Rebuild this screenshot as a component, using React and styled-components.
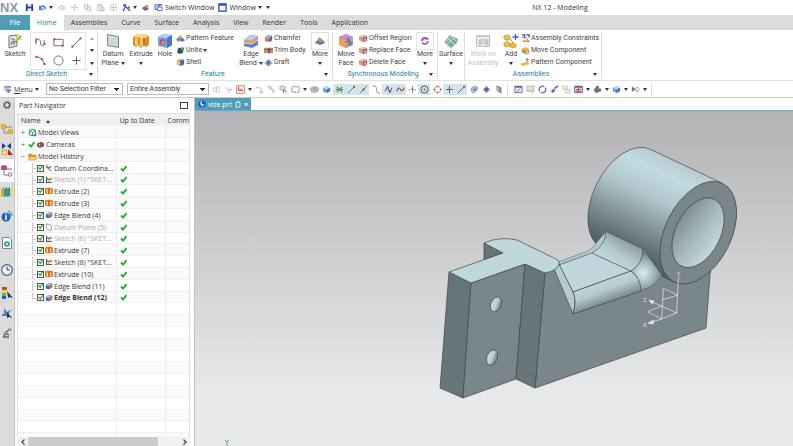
import React, { useState } from 'react'
import styled, { createGlobalStyle } from 'styled-components'

const icons = {
  save: <><path d="M1 1h7l1 1v7H1z" fill="#2d3c9c" /><path d="M3 1h4v3H3z" fill="#dfe6f5" /><path d="M3 6h4v3H3z" fill="#eef2fa" /></>,
  undo: <path d="M2 3v4h4M2 6c2-4 6-3 6 1" fill="none" stroke="#4c8bd4" strokeWidth="2" />,
  redo: <path d="M8 3v4H4M8 6C6 2 2 3 2 7" fill="none" stroke="#d3d6da" strokeWidth="2" />,
  cut: <path d="M5 1v8M1 5h8" fill="none" stroke="#cdcdcd" strokeWidth="1.500" />,
  copy: <path d="M1.500 1.500h4v5h-4zM4.500 3.500h4v5h-4z" fill="#f2f2f2" stroke="#c6c6c6" />,
  paste: <path d="M1.500 2.500h6v6h-6zM3 1h3v2H3zM5 5h4v4H5z" fill="#eee" stroke="#c9c9c9" />,
  plus: <><circle cx="5" cy="5" r="4" fill="none" stroke="#c9c9c9" /><path d="M5 2v6M2 5h6" stroke="#bbb" strokeWidth="1" /></>,
  people: <><circle cx="3" cy="2.500" r="1.800" fill="#4166c4" /><path d="M1 9l3-5 3 3 2 2" fill="none" stroke="#4166c4" strokeWidth="1.500" /><circle cx="7.500" cy="5" r="1.500" fill="#d34a55" /></>,
  spark: <><path d="M1 6l4-2 4 2-4 3z" fill="#536bb5" /><path d="M5 1l4 3-3 2z" fill="#e98a3a" /><path d="M1 5l4-2v3z" fill="#c8655b" /></>,
  switchWin: <><path d="M1 2h5v5H1z" fill="#cfe0f7" stroke="#3567b8" /><path d="M4 4.500h5v4H4z" fill="#fff" stroke="#3567b8" /><path d="M5 1h4v2H5z" fill="#3f7de0" /></>,
  win: <><path d="M1 1h8v8H1z" fill="#fff" stroke="#1f4ec0" strokeWidth="1.400" /><path d="M1 1h8v2H1z" fill="#1f4ec0" /></>,
  pattern: <><path d="M0 6l3-3 3 2-3 4z" fill="#6f86cf" /><path d="M2 4l3-3 2 3-2 2z" fill="#e59a3c" /><path d="M4 7l3-3 3 3-3 2z" fill="#5b74c8" /></>,
  unite: <><path d="M2 2h6v6H2z" fill="#2d6d6c" /><circle cx="4" cy="6" r="2.500" fill="#3c4a50" /><path d="M6 1l3 1v3H6z" fill="#4f9f86" /></>,
  shell: <><path d="M1 3l3-2 5 1v5L5 9 1 7z" fill="#e58b52" /><path d="M5 3l4-1v5L5 9z" fill="#3c61c4" /><path d="M2 3h2v4H2z" fill="#f5d0b0" /></>,
  chamfer: <><path d="M1 4l3-3 5 1v5L6 9 1 8z" fill="#dd8245" /><path d="M1 4l3-3 5 1-3 3z" fill="#8eb0ea" /><path d="M6 5l3-3v5L6 9z" fill="#3f68c4" /></>,
  trim: <><path d="M0 2h4v6H0zM6 2h4v6H6z" fill="#e88a3f" /><path d="M4 2h3v6H4z" fill="#4466c8" /><path d="M0 4h10" stroke="#b0413b" /></>,
  draft: <><path d="M0 6l4-4h2l4 4-5 3z" fill="#9aaedd" /><path d="M4 2h2v7H4z" fill="#c95c63" /><path d="M2 5l3-2 3 2-3 2z" fill="#5a6fb9" /></>,
  face: <><path d="M0 3l4-2 5 1v5L4 9 0 7z" fill="#df9b63" /><path d="M0 3l4-2 5 1-5 2z" fill="#ecc59b" /><path d="M4 4l5-1v5L5 9z" fill="#9a5f9f" /><path d="M6 5l2 1v2L6 7z" fill="#e8d6ee" /></>,
  constraint: <><path d="M1 1h3v3M6 1h3v3" fill="none" stroke="#3d4fd0" strokeWidth="1.500" /><path d="M1 4h5" stroke="#d04545" /><path d="M2 8h7M4 6v3" stroke="#d9a32b" strokeWidth="1.500" /><path d="M6 5l3 4" stroke="#c33" /></>,
  moveComp: <><path d="M1 3l4-2 4 2v4L5 9 1 7z" fill="#eab83f" /><path d="M1 3l4 2v4L1 7z" fill="#cf942a" /><circle cx="7" cy="7" r="2" fill="#cfd3d8" stroke="#777" strokeWidth=".6" /></>,
  patComp: <><path d="M0 6l3-1 2 1v2L2 9 0 8zM4 5l3-1 2 1v2L6 8z" fill="#eab83f" /><path d="M7 0v4M5 2h4" stroke="#4e87d8" /></>,
  menu: <><path d="M1 1h8v2H1zM1 4h6v1H1zM2 6h3v1H2z" fill="#7d92b5" /><path d="M4 5h5v2H7v2H5V7H4z" fill="#66789c" /></>,
  g1: <><circle cx="3" cy="5" r="2" fill="none" stroke="#c8c8c8" /><path d="M5 2h3v6H5z" fill="none" stroke="#c8c8c8" /></>,
  g2: <path d="M1 2l3 3h5M5 5v4M7 3v4" fill="none" stroke="#c4c4c4" />,
  redbox: <><path d="M.700.700h8.600v8.600H.700z" fill="#fff1ef" stroke="#d8796c" /><path d="M3 2v4h4M5 4l3 3" fill="none" stroke="#b33" /></>,
  g3: <path d="M1 3h3c4 0 3 3 3 6M5 7l2 2 2-2" fill="none" stroke="#bdbdbd" strokeWidth="1.200" />,
  g4: <path d="M1 1l4 1v3L1 3zM4 4l4 1v4L6 8V5z" fill="#cfcfcf" stroke="#bbb" strokeWidth=".5" />,
  cursorBox: <><path d="M1 2l3-1 3 1v3L4 6 1 5z" fill="#ddd" stroke="#888" strokeWidth=".6" /><path d="M5 5l4 3M5 5v4" stroke="#c44" /></>,
  dashed: <path d="M1 2h8v6H1z" fill="none" stroke="#555" strokeDasharray="1.500 1" />,
  disc: <><ellipse cx="5" cy="5" rx="4.500" ry="3" fill="#b9bfca" stroke="#79839a" strokeWidth=".7" /><ellipse cx="5" cy="4.500" rx="2" ry="1.200" fill="#cf8d83" /></>,
  cube: <><path d="M1 3l4-2 4 2v4L5 9 1 7z" fill="#6f9be2" /><path d="M1 3l4-2 4 2-4 2z" fill="#c0dbfa" /><path d="M5 5l4-2v4L5 9z" fill="#4674c6" /></>,
  snap: <><path d="M2 2l6 6M8 2L2 8M1 5h8" stroke="#4a6e46" strokeWidth="1.200" /><circle cx="5" cy="5" r="1.500" fill="#e28a3e" /></>,
  slash: <><path d="M1 9l8-8" stroke="#666" /><circle cx="8" cy="2" r="1.200" fill="#c44" /></>,
  slashMid: <><path d="M1 9l8-8" stroke="#666" /><circle cx="5" cy="5" r="1.300" fill="#c44" /></>,
  curve: <path d="M1 1c4 0 4 2 4 4s0 4 4 4" fill="none" stroke="#777" />,
  zig: <><path d="M1 7l3-5 2 6 3-5" fill="none" stroke="#4e62b8" strokeWidth="1.200" /><circle cx="4" cy="3" r="1.200" fill="#c44" /><circle cx="7" cy="7" r="1.200" fill="#c44" /></>,
  wave: <path d="M1 7c1-5 3-4 4-2s3 2 4-2" fill="none" stroke="#b33c3c" strokeWidth="1.300" />,
  tee: <><path d="M5 1v8M1 6c2-2 6-2 8 0" fill="none" stroke="#8a8a8a" /><circle cx="5" cy="5" r="1" fill="#c66" /></>,
  target: <><circle cx="5" cy="5" r="4" fill="none" stroke="#44575e" /><circle cx="5" cy="5" r="1.200" fill="#c44" /></>,
  circ: <><circle cx="5" cy="5" r="3.500" fill="none" stroke="#999" /><path d="M5 .500v2M5 7.500v2M.500 5h2M7.500 5h2" stroke="#d55" strokeWidth="1.500" /></>,
  cross: <><path d="M5 1v8M1 5h8" stroke="#555" /><circle cx="5" cy="5" r="1" fill="#c44" /></>,
  gem: <><path d="M1 5l4-4 4 4-4 4z" fill="#7587c8" /><path d="M3 5l2-2 2 2-2 2z" fill="#8c3e72" /></>,
  shade: <><path d="M3 1l5 2v6L4 7z" fill="#979797" stroke="#666" strokeWidth=".6" /><path d="M2 2l3 1v4L2 6z" fill="#bcbcbc" /></>,
  surf: <><path d="M2 3l4-2 3 2-2 4-4 2-2-3z" fill="#a7c4ec" stroke="#6586be" strokeWidth=".7" /><path d="M5 3v4M3 5h5" stroke="#c25a5a" strokeWidth=".8" /></>,
  zoomwin: <><path d="M1 1.500h8v7H1z" fill="#e7edf6" stroke="#576d99" /><path d="M1 1h8v2H1z" fill="#576d99" /><path d="M3 8l4-4" stroke="#c44" /></>,
  note: <><path d="M1 1h8v6H1z" fill="#dcdfe4" stroke="#a8adb8" strokeWidth=".8" /><circle cx="7" cy="7" r="2" fill="#e8c98b" /></>,
  rotate: <path d="M2 7a3.600 3.600 0 0 1 5-5M8 3a3.600 3.600 0 0 1-5 5" fill="none" stroke="#5a75b8" strokeWidth="1.500" />,
  probe: <><path d="M1 7l3-3 2 2-3 3z" fill="#4762c6" /><path d="M5 4l4-3" stroke="#4762c6" strokeWidth="1.500" /><circle cx="4" cy="6" r="1" fill="#c55" /></>,
  sheets: <path d="M1 1h5v4H1zM4 5h5v4H4z" fill="#eee" stroke="#bbb" strokeWidth=".8" />,
  grid: <><path d="M.700 1.500h8.600v7H.700z" fill="#f9dedb" stroke="#4a68b5" /><path d="M1 1h8v2H1z" fill="#4a68b5" /><path d="M2 5h6M2 7h6M5 3v5" stroke="#d2564d" strokeWidth="1.300" /></>,
  gray: <path d="M1 5l3-4h3l-1 3h3v3L4 9 2 8z" fill="#6d7377" />,
  axis: <><path d="M1 1v7l3-3z" fill="#3c9c54" /><path d="M2 3l4 3" stroke="#c44" strokeWidth="1.300" /><path d="M7 2l2 3-2 3-2-3z" fill="#fff" stroke="#777" strokeWidth=".7" /></>,
  views: <><circle cx="5" cy="5" r="3.600" fill="#e8f3ec" stroke="#3d9a66" strokeWidth="1.300" /><path d="M2 3l3 2 3-2M5 5v4" fill="none" stroke="#3d9a66" /><circle cx="8" cy="8" r="1.300" fill="#6a5fc0" /></>,
  camera: <><path d="M1 4l5-2 3 2v3L4 9 1 7z" fill="#a6473f" /><circle cx="4" cy="5.500" r="2" fill="#5064a8" /><circle cx="4" cy="5.500" r=".8" fill="#fff" /></>,
  folder: <><path d="M0 2h4l1 1h4v6H1z" fill="#d49b28" /><path d="M2 5h8L8 9H1z" fill="#f7d76b" stroke="#b08322" strokeWidth=".5" /></>,
  datum: <><path d="M2 1l1 4 5 4M3 5l5-2" fill="none" stroke="#555" strokeWidth="1.200" /><path d="M1 3l4 3" stroke="#a33" /><path d="M5 2l3 4" stroke="#888" /></>,
  sketch: <><path d="M2 1v8M2 4h3M2 8h7" fill="none" stroke="#444" strokeWidth="1.200" /><path d="M4 7l4-5" stroke="#caa247" strokeWidth="1.300" /><path d="M5 4h4" fill="none" stroke="#555" /></>,
  extrude: <><path d="M0 2l3-1h4l3 1v6l-3 1H3L0 8z" fill="#e07c27" /><path d="M2 3h2v5H2zM6 3h2v5H6z" fill="#fbd191" /><path d="M5 2v7" stroke="#a24a3f" /></>,
  blend: <><path d="M1 4l4-3 4 1v5L5 9 1 8z" fill="#4268c5" /><path d="M1 4l4-3 4 1-4 3z" fill="#a9c2f0" /><path d="M5 5c2 0 2-2 4-2v4L5 9z" fill="#dd6c3b" /></>,
  plane: <path d="M2 1l3 1 3 1v6H4L2 7z" fill="#fafafa" stroke="#8a8f90" />,
  prt: <><circle cx="5" cy="5" r="4.500" fill="#1c51c9" /><path d="M3 2h2v3l3 1-2 2-3-2z" fill="#dce7ff" /></>,
  clip: <path d="M2.500 3h5v6h-5zM4 1.500h2V3" fill="none" stroke="#fff" />,

  sketchBig: <><path d="M2 3l8-1v11l-8 2z" fill="#e4e7e0" stroke="#66776e" /><path d="M4 6h3v3h3M4 12l1-3M7 12v-3M4 9h6" fill="none" stroke="#6a7a72" strokeWidth="1.100" /><path d="M12 0l.800 3 3.200-1-2 2.500 1 3-3-1.500-3 2 1-3-2.500-2 3.500 0z" fill="#ddd94c" /><path d="M10 8l4-5" stroke="#5fae62" strokeWidth="1.200" /></>,
  datumBig: <path d="M2.500 1.500l11 2v11l-11-2z" fill="#cfdcd4" stroke="#7b8b84" />,
  extrudeBig: <><path d="M0 4l4-3h8l4 2v9l-3 2-2-2-3 3-3-3-2 2-3-2z" fill="#dd8c28" /><path d="M2 5h3v7H2zM7 4h3v9H7z" fill="#f8c766" /><path d="M0 4l4-3h8l4 2-4 2z" fill="#fad78f" /><path d="M11 5v8" stroke="#a85e20" /></>,
  holeBig: <><path d="M1 4l5-3 9 1v10l-5 3-9-2z" fill="#7d9fe6" /><path d="M1 4l5-3 9 1-5 3z" fill="#b5cdf7" /><path d="M10 5l5-3v10l-5 3z" fill="#4f72c5" /><circle cx="5.500" cy="9" r="3" fill="#8a5f80" /><circle cx="6" cy="9.500" r="2" fill="#e38a56" /></>,
  blendBig: <><path d="M1 7l6-5 8 1v9l-6 3-8-2z" fill="#5b82d8" /><path d="M1 7l6-5 8 1-6 5z" fill="#b4cdf5" /><path d="M1 7l8 1 6-5v4l-6 4-8-1z" fill="#ee9b52" /><path d="M1 10l8 1 6-4" fill="none" stroke="#f7d79e" /></>,
  moreBig: <><path d="M3 10l4-5 3 1 3 4-5 2z" fill="#5c79c9" /><path d="M7 4l3 2v3l-4-1z" fill="#e58f3d" /></>,
  moveBig: <><path d="M1 4l7-3 7 3v8l-7 3-7-3z" fill="#d88b55" /><path d="M1 4l7-3 7 3-7 3z" fill="#c58cd3" /><path d="M8 7l7-3v8l-7 3z" fill="#a7a6b2" /><path d="M1 4l7 3v8l-7-3z" fill="#eca05a" /><path d="M11 5v8M7 9h8M9 6l5 6" stroke="#75747f" strokeWidth="1.200" /></>,
  replBig: <><path d="M4 8c0-5 6-5 8-2l-2 1-3-1-1 2z" fill="#9657ae" /><path d="M12 8c0 5-6 5-8 2l2-1 3 1 1-2z" fill="#b079c4" /></>,
  surfBig: <><path d="M1 9l6-7 8 4-1 4-6 5z" fill="#7cab95" /><path d="M4 5l8 7M7 2l7 7M4 11l9-7M2 9l8-6" stroke="#d5e6dc" strokeWidth=".8" /></>,
  workBig: <><path d="M1.500 2.500h13v11h-13z" fill="#eee" stroke="#bbb" /><path d="M1 2h14v2H1z" fill="#c9c9c9" /><path d="M4 7l3-1v5l-3 1zM9 6l4 1v5l-4-1z" fill="#ccc" stroke="#aaa" strokeWidth=".5" /></>,
  addBig: <><path d="M1 3l3-1 3 1v3L4 7 1 6zM1 10l3-1 3 1v3l-3 1-3-1zM7 11l3-1 3 1v3l-3 1-3-1z" fill="#edc04a" stroke="#b78722" strokeWidth=".6" /><path d="M4 7v2M7 5l3 5" stroke="#c2953a" /><path d="M12.500 1v6M9.500 4h6" stroke="#2b64c9" strokeWidth="1.300" /></>,

  profile: <><path d="M1 3v5M1 6c0-5 5-5 5 0s4 5 4 0V3" fill="none" stroke="#666" /><circle cx="1.500" cy="2.500" r="1.100" fill="#c33" /><circle cx="10.500" cy="7.500" r="1.100" fill="#c33" /></>,
  rect: <><path d="M1 2.500h10v7H1z" fill="none" stroke="#666" /><circle cx="1.500" cy="2.500" r="1.200" fill="#c33" /><circle cx="10.500" cy="9.500" r="1.200" fill="#c33" /></>,
  line: <><path d="M2 10l8-8" stroke="#666" /><circle cx="1.500" cy="10.500" r="1.200" fill="#c33" /><circle cx="10.500" cy="1.500" r="1.200" fill="#c33" /></>,
  arc: <><path d="M1 2c5 0 8 3 9 8" fill="none" stroke="#666" /><circle cx="1.500" cy="2" r="1.200" fill="#c33" /><circle cx="7.500" cy="4.500" r="1.200" fill="#c33" /><circle cx="10.500" cy="10" r="1.200" fill="#c33" /></>,
  circleTool: <circle cx="6" cy="6" r="5" fill="none" stroke="#666" />,
  point: <path d="M6 1.500v9M1.500 6h9" stroke="#555" />,

  gear: <><circle cx="6" cy="6" r="2.600" fill="none" stroke="#555" strokeWidth="1.200" /><circle cx="6" cy="6" r="3.800" fill="none" stroke="#777" strokeWidth="1" strokeDasharray="1.500 1.500" /></>,
  asmNav: <><path d="M0 2l2-1 3 1v3L2 6 0 5zM7 7l2-1 3 1v3l-3 1-2-1z" fill="#edb52e" stroke="#b98a1c" strokeWidth=".5" /><path d="M5 4h6M3 6v4h4" fill="none" stroke="#888" /></>,
  consNav: <><path d="M1 0l4 3-4 3zM10 0L6 3l4 3z" fill="#2630b8" /><path d="M1.500 7.500h4v4h-4z" fill="#fff" stroke="#e0ac1c" strokeWidth="1.400" /><path d="M7 6l5 6H7z" fill="#b82626" /></>,
  partNav: <><path d="M0 1l3-1 3 1v4H0z" fill="#b84b94" /><path d="M3 4v6h4M5 4h6" fill="none" stroke="#777" /><circle cx="9" cy="9.500" r="1.800" fill="#fff" stroke="#b84b94" /></>,
  library: <><path d="M0 3l3-2v9l-3 1z" fill="#d8a52e" /><path d="M3 3l3-2v9l-3 1z" fill="#2f9e79" /><path d="M6 3l3-2v9l-3 1z" fill="#3088c9" /><path d="M9 3l3-2v9l-3 1z" fill="#f0d565" /></>,
  info: <><circle cx="5" cy="7" r="4.500" fill="#1f62bd" /><path d="M5 5v5M5 3v1" stroke="#fff" strokeWidth="1.500" /><path d="M7 1c3 0 4 3 4 5M8 3c1 0 2 2 1 4" fill="none" stroke="#3e7ac6" /></>,
  web: <><path d="M1.500.500h7l2 2v9h-9z" fill="#fff" stroke="#6d88a6" /><circle cx="6" cy="7" r="2.800" fill="#2f9c6e" /><circle cx="6" cy="7" r="1.200" fill="#cfe9fa" /></>,
  clock: <><circle cx="6" cy="6" r="5.300" fill="#eef3fa" stroke="#55616f" strokeWidth="1.200" /><path d="M6 2.500V6h3" fill="none" stroke="#2c3f60" /></>,
  rainbow: <><path d="M1 0h5v3H1z" fill="#e23a2f" /><path d="M1 3h4v3H1z" fill="#f2d628" /><path d="M1 6h4v3H1z" fill="#43c254" /><path d="M1 9h4v3H1z" fill="#2d55d8" /><path d="M6 4l6 7-3-1-2 1z" fill="#333" /></>,
  process: <><path d="M1 9V7l2 0V1l3 4 5-3-3 4 0 3z" fill="#4c84c2" /><path d="M6 5l5 6-3-1-2 1z" fill="#333" /></>,
  robot: <><path d="M3 10l1-4 5-4M2 10h6M4 6l4 2" fill="none" stroke="#666" strokeWidth="1.600" /><circle cx="9" cy="2.500" r="1.600" fill="#999" /><circle cx="4" cy="6" r="1.200" fill="#d28c3c" /></>,
}

const Icon = ({ name, size = 10, box = 10 }) => (
  <svg width={size} height={size} viewBox={`0 0 ${box} ${box}`} aria-hidden="true">{icons[name]}</svg>
)

const Caret = ({ up, light }) => (
  <svg width="4" height="3" viewBox="0 0 4 3" aria-hidden="true">
    <path d={up ? 'M0 3l2-3 2 3z' : 'M0 0h4L2 3z'} fill={light ? '#aaa' : '#333'} />
  </svg>
)

const tabs = ['Home', 'Assemblies', 'Curve', 'Surface', 'Analysis', 'View', 'Render', 'Tools', 'Application']

const selectionGroups = [
  ['g1', 'g2', 'redbox', '>', 'g3', 'g4', 'cursorBox', 'dashed', '>', 'disc', 'cube'],
  ['snap*', 'slash*', 'slashMid*'],
  ['curve', 'zig*', 'wave*', 'tee', 'target*'],
  ['circ', 'cross*', 'slash*'],
  ['surf', 'gem', 'shade'],
]
const viewGroup = ['zoomwin', 'note', 'rotate', 'probe', 'sheets', 'grid', '>', 'gray', '>', 'cube', '>', 'axis', '>']

const history = [
  { icon: 'datum', name: 'Datum Coordina...' },
  { icon: 'sketch', name: 'Sketch (1) "SKET...', dim: true },
  { icon: 'extrude', name: 'Extrude (2)' },
  { icon: 'extrude', name: 'Extrude (3)' },
  { icon: 'blend', name: 'Edge Blend (4)' },
  { icon: 'plane', name: 'Datum Plane (5)', dim: true },
  { icon: 'sketch', name: 'Sketch (6) "SKET...', dim: true },
  { icon: 'extrude', name: 'Extrude (7)' },
  { icon: 'sketch', name: 'Sketch (8) "SKET...' },
  { icon: 'extrude', name: 'Extrude (10)' },
  { icon: 'blend', name: 'Edge Blend (11)' },
  { icon: 'blend', name: 'Edge Blend (12)', bold: true },
]

const sideTabs = [
  ['gear', 14, 'Resource bar options'],
  ['asmNav', 20, 'Assembly Navigator'],
  ['consNav', 20, 'Constraint Navigator'],
  ['partNav', 23, 'Part Navigator'],
  ['library', 20, 'Reuse Library'],
  ['info', 27, 'HD3D Tools'],
  ['web', 27, 'Web Browser'],
  ['clock', 27, 'History'],
  ['rainbow', 20, 'System Materials'],
  ['process', 20, 'Process Studio'],
  ['robot', 20, 'Manufacturing'],
]

const BigTool = ({ icon, label, second, w, arrow, framed, disabled }) => (
  <Big $w={w} disabled={disabled}>
    <BigIcon $framed={framed}><Icon name={icon} size={16} box={16} /></BigIcon>
    <span>{label}</span>
    {second ? <SecondLine>{second}{arrow && <Caret />}</SecondLine> : arrow && <SecondLine><Caret /></SecondLine>}
  </Big>
)

const ToolList = ({ w, items }) => (
  <List $w={w}>
    {items.map(([icon, label, arrow]) => (
      <Tool key={label}><Icon name={icon} size={9} />{label}{arrow && <Caret />}</Tool>
    ))}
  </List>
)

const IconStrip = ({ items }) => (
  <Strip>
    {items.map((item, i) => {
      if (item === '>') return <Slot key={i} $narrow aria-label="More options"><Caret /></Slot>
      const on = item.endsWith('*')
      const name = item.replace('*', '')
      return <Slot key={i} $on={on} aria-label={name}><Icon name={name} size={9} /></Slot>
    })}
  </Strip>
)

const Check = () => (
  <svg width="7" height="7" viewBox="0 0 7 7" aria-hidden="true">
    <path d="M1 3.500l2 2L6.500 1" fill="none" stroke="#1db52c" strokeWidth="1.900" />
  </svg>
)

const Navigator = () => {
  const [hidden, setHidden] = useState([])
  const toggle = (name) => setHidden(hidden.includes(name) ? hidden.filter((n) => n !== name) : [...hidden, name])
  const blanks = Array.from({ length: 12 })
  return (
    <Panel>
      <PanelTitle>Part Navigator<Pin aria-label="Undock" /></PanelTitle>
      <TableBox>
        <Table>
          <colgroup><col width="98" /><col width="49" /><col /></colgroup>
          <thead>
            <tr><th>Name <SortMark><Caret up /></SortMark></th><th>Up to Date</th><th>Comm</th></tr>
          </thead>
          <tbody>
            <tr><td><Node><Expander>+</Expander><Icon name="views" size={9} />Model Views</Node></td><td /><td /></tr>
            <tr><td><Node><Expander>+</Expander><Check /><Icon name="camera" size={9} />Cameras</Node></td><td /><td /></tr>
            <tr><td><Node><Expander>−</Expander><Icon name="folder" size={9} />Model History</Node></td><td /><td /></tr>
            {history.map((f, i) => (
              <tr key={f.name}>
                <td>
                  <Leaf $dim={f.dim} $bold={f.bold}>
                    <Branch $last={i === history.length - 1} />
                    <Tick type="checkbox" checked={!hidden.includes(f.name)} onChange={() => toggle(f.name)} />
                    <Icon name={f.icon} size={8} />
                    <span>{f.name}</span>
                  </Leaf>
                </td>
                <td><Check /></td>
                <td />
              </tr>
            ))}
            {blanks.map((_, i) => <tr key={i}><td /><td /><td /></tr>)}
          </tbody>
        </Table>
      </TableBox>
      <ScrollBar>
        <ScrollButton aria-label="Scroll left"><svg width="4" height="6" viewBox="0 0 4 6"><path d="M3.500.500L1 3l2.500 2.500" fill="none" stroke="#444" strokeWidth="1.300" /></svg></ScrollButton>
        <Track><Thumb /></Track>
        <ScrollButton aria-label="Scroll right"><svg width="4" height="6" viewBox="0 0 4 6"><path d="M.500.500L3 3 .500 5.500" fill="none" stroke="#444" strokeWidth="1.300" /></svg></ScrollButton>
      </ScrollBar>
    </Panel>
  )
}

const Model = () => (
  <Drawing viewBox="195 111 598 335" role="img" aria-label="Bracket part">
    <defs>
      <linearGradient id="tube" gradientUnits="userSpaceOnUse" x1="686" y1="166" x2="639" y2="265">
        <stop offset="0" stopColor="#b7ccd2" /><stop offset=".15" stopColor="#c3dae1" /><stop offset=".38" stopColor="#b2c8ce" />
        <stop offset=".62" stopColor="#899a9f" /><stop offset=".85" stopColor="#5f6f73" /><stop offset="1" stopColor="#4f5d61" />
      </linearGradient>
      <linearGradient id="bore" gradientUnits="userSpaceOnUse" x1="706" y1="197" x2="692" y2="268">
        <stop offset="0" stopColor="#68777b" /><stop offset=".45" stopColor="#9fb1b6" /><stop offset=".8" stopColor="#c0d7dd" /><stop offset="1" stopColor="#c5dce2" />
      </linearGradient>
      <linearGradient id="round" gradientUnits="userSpaceOnUse" x1="600" y1="281" x2="608" y2="303">
        <stop offset="0" stopColor="#c0d8de" /><stop offset=".45" stopColor="#b3cad0" /><stop offset="1" stopColor="#77878b" />
      </linearGradient>
      <linearGradient id="fillet" gradientUnits="userSpaceOnUse" x1="626" y1="239" x2="611" y2="263">
        <stop offset="0" stopColor="#8b9ca1" /><stop offset=".6" stopColor="#b4cbd1" /><stop offset="1" stopColor="#c0d8de" />
      </linearGradient>
      <radialGradient id="corner" gradientUnits="userSpaceOnUse" cx="643" cy="273" r="20">
        <stop offset="0" stopColor="#dcecf0" /><stop offset=".5" stopColor="#a9bec4" /><stop offset="1" stopColor="#738387" />
      </radialGradient>
      <linearGradient id="drill" x1="0" y1="0" x2="0" y2="1">
        <stop offset="0" stopColor="#c9dde3" /><stop offset=".5" stopColor="#bccfd5" /><stop offset="1" stopColor="#6b7a7e" />
      </linearGradient>
    </defs>
    <g stroke="#3c4648" strokeWidth=".7" strokeLinejoin="round">
      <path d="M545 273L559 265 592 256 640 262 711 262 706 328 535 388z" fill="#7a878a" />
      <path d="M484 243l19 10-19 7z" fill="#67757a" />
      <path d="M449 272L471 283 463 398 440 388z" fill="#67757a" />
      <path d="M471 283L525 264 516 379 463 398z" fill="#7a878a" />
      <path d="M525 264L545 273 535 388 516 379z" fill="#67757a" />
      <path d="M650.400 149.300L722.400 183.300 674.200 282.100 602.200 248.100A54.900 33 -63.600 0 1 650.400 149.300z" fill="url(#tube)" />
      <path d="M558 262L588 251Q594 248 597 242L606 231.500Q605 247 592 253L559 265z" fill="#b3c9cf" strokeWidth=".4" />
      <path d="M559 265L592 253 631 271 573 292z" fill="#bfd6dc" strokeWidth=".5" />
      <path d="M554 269L559 264 573 292Q577 300 573 314z" fill="#b4cad0" />
      <path d="M573 292L631 271Q641 278 641 291L573 314Q577 300 573 292z" fill="url(#round)" />
      <path d="M592 253Q605 246 606 231.500L643 249Q643 264 631 271z" fill="url(#fillet)" strokeWidth=".5" />
      <path d="M643 249L662 275Q656 285 641 291 641 278 631 271 643 264 643 249z" fill="url(#corner)" strokeWidth=".4" />
      <path d="M449 272L503 253 484 243Q500 236 517 240L556 259Q562 262 557 268 552 272 545 273L525 264 471 283z" fill="#bfd6dc" />
      <ellipse cx="698.300" cy="232.700" rx="54.900" ry="33" transform="rotate(-63.600 698.300 232.700)" fill="#7a878a" />
      <ellipse cx="698" cy="232.700" rx="37.300" ry="22.500" transform="rotate(-63.600 698 232.700)" fill="url(#bore)" />
      <ellipse cx="496" cy="304.500" rx="7.800" ry="5.200" transform="rotate(-68 496 304.500)" fill="url(#drill)" />
      <ellipse cx="492" cy="357.500" rx="7.800" ry="5.200" transform="rotate(-68 492 357.500)" fill="url(#drill)" />
    </g>
    <g fill="none" stroke="#e3e8e9" strokeWidth=".7">
      <path d="M678.500 277L676.500 313 661.700 306M677.700 295L663.300 288.300 661.700 319 676.500 313M662 300L677.700 295M661.700 319L647.700 311.700 661.700 306M661.700 319L649 323M661.700 306L650 301" />
      <path d="M654 320l-6 3 5 1zM649 300l5 1-2 3z" fill="#e3e8e9" />
    </g>
    <AxisText x="677" y="276">Y</AxisText>
    <AxisText x="643" y="302">Z</AxisText>
    <AxisText x="643" y="327">X</AxisText>
    <path d="M225 440l2 2 2-2M227 442v4" fill="none" stroke="#5fae6b" />
  </Drawing>
)

const App = () => {
  return (
    <Window>
      <Global />
      <TitleBar>
        <QuickAccess>
          <Logo>NX</Logo>
          <Quick aria-label="Save"><Icon name="save" size={9} /></Quick>
          <Quick aria-label="Undo"><Icon name="undo" size={9} /><Caret /></Quick>
          <Quick aria-label="Redo"><Icon name="redo" size={9} /></Quick>
          <Quick aria-label="Cut"><Icon name="cut" size={9} /></Quick>
          <Quick aria-label="Copy"><Icon name="copy" size={9} /></Quick>
          <Quick aria-label="Paste"><Icon name="paste" size={9} /></Quick>
          <Quick aria-label="Repeat"><Icon name="plus" size={9} /></Quick>
          <Quick aria-label="Command finder"><Icon name="people" size={9} /><Caret /></Quick>
          <Quick aria-label="Touch mode"><Icon name="spark" size={9} /></Quick>
          <Quick><Icon name="switchWin" size={9} />Switch Window</Quick>
          <Quick><Icon name="win" size={9} />Window<Caret /></Quick>
          <Quick aria-label="Customize"><Caret /></Quick>
        </QuickAccess>
        <Title>NX 12 - Modeling</Title>
      </TitleBar>

      <TabBar>
        <FileTab>File</FileTab>
        {tabs.map((t) => <Tab key={t} $active={t === 'Home'}>{t}</Tab>)}
      </TabBar>

      <Ribbon>
        <Group>
          <Tools>
            <BigTool icon="sketchBig" label="Sketch" w={30} />
            <Gallery>
              {['profile', 'rect', 'line', 'arc', 'circleTool', 'point'].map((n) => (
                <Cell key={n} aria-label={n}><Icon name={n} size={11} box={12} /></Cell>
              ))}
            </Gallery>
            <GalleryScroll>
              <Caret up light /><Caret /><Caret />
            </GalleryScroll>
          </Tools>
          <Caption>Direct Sketch<Caret /></Caption>
        </Group>
        <Group>
          <Tools>
            <BigTool icon="datumBig" label="Datum" second="Plane" arrow w={30} />
            <BigTool icon="extrudeBig" label="Extrude" arrow w={26} />
            <BigTool icon="holeBig" label="Hole" w={22} />
            <ToolList w={62} items={[['pattern', 'Pattern Feature'], ['unite', 'Unite', true], ['shell', 'Shell']]} />
            <BigTool icon="blendBig" label="Edge" second="Blend" arrow w={26} />
            <ToolList w={44} items={[['chamfer', 'Chamfer'], ['trim', 'Trim Body'], ['draft', 'Draft']]} />
            <BigTool icon="moreBig" label="More" arrow framed w={24} />
          </Tools>
          <Caption>Feature<Caret /></Caption>
        </Group>
        <Group>
          <Tools>
            <BigTool icon="moveBig" label="Move" second="Face" w={26} />
            <ToolList w={54} items={[['face', 'Offset Region'], ['face', 'Replace Face'], ['face', 'Delete Face']]} />
            <BigTool icon="replBig" label="More" arrow framed w={24} />
          </Tools>
          <Caption>Synchronous Modeling<Caret /></Caption>
        </Group>
        <Group>
          <Tools><BigTool icon="surfBig" label="Surface" arrow w={26} /></Tools>
        </Group>
        <Group>
          <Tools>
            <BigTool icon="workBig" label="Work on" second="Assembly" w={36} disabled />
            <BigTool icon="addBig" label="Add" arrow w={20} />
            <ToolList w={80} items={[['constraint', 'Assembly Constraints'], ['moveComp', 'Move Component'], ['patComp', 'Pattern Component']]} />
          </Tools>
          <Caption>Assemblies<Caret /></Caption>
        </Group>
      </Ribbon>

      <SelectionBar>
        <MenuButton><Icon name="menu" size={9} /><span><u>M</u>enu</span><Caret /></MenuButton>
        <Filter $w={77} aria-label="Selection filter"><option>No Selection Filter</option></Filter>
        <Filter $w={82} aria-label="Selection scope"><option>Entire Assembly</option></Filter>
        {selectionGroups.map((g, i) => <IconStrip key={i} items={g} />)}
        <Divider />
        <IconStrip items={viewGroup} />
        <Divider />
      </SelectionBar>

      <Body>
        <SideBar>
          {sideTabs.map(([name, h, label]) => (
            <SideTab key={name} $h={h} $active={name === 'partNav'} $top={name === 'gear'} aria-label={label}>
              <Icon name={name} size={12} box={12} />
            </SideTab>
          ))}
        </SideBar>
        <Navigator />
        <Workspace>
          <DocTabs>
            <DocTab><Icon name="prt" size={8} />vize.prt<Icon name="clip" size={8} /><b>×</b></DocTab>
          </DocTabs>
          <Canvas><Model /></Canvas>
        </Workspace>
      </Body>
    </Window>
  )
}

export default App


const Global = createGlobalStyle`
  * { box-sizing: border-box; }
  body {
    margin: 0;
    background: #fff;
  }
  body, button, select, input, table {
    font-family: "Open Sans", "Noto Sans", sans-serif;
    font-size: 7px;
    line-height: 9px;
    color: #333;
  }
  button {
    border: 0;
    padding: 0;
    background: none;
    white-space: nowrap;
  }
  svg { flex: none; }
`;
const Window = styled.div`
  display: flex;
  flex-direction: column;
  height: 100vh;
  overflow: hidden;
`;
const TitleBar = styled.header`
  display: flex;
  flex: none;
  align-items: center;
  height: 15px;
`;
const QuickAccess = styled.div`
  display: flex;
  flex: none;
  align-items: center;
  gap: 4px;
  width: 327px;
`;
const Logo = styled.span`
  width: 21px;
  font-family: "Liberation Sans", sans-serif;
  font-size: 13px;
  font-weight: bold;
  line-height: 15px;
  color: #8b9ba6;
`;
const Quick = styled.button`
  display: flex;
  align-items: center;
  gap: 2px;
`;
const Title = styled.div`
  flex: 1;
  text-align: center;
`;
const TabBar = styled.nav`
  display: flex;
  flex: none;
  height: 15px;
  background: #dcdcdc;
`;
const Tab = styled.button`
  padding: 0 7px;
  line-height: 15px;
  color: ${(p) => (p.$active ? '#1c7f9f' : '#333')};
  background: ${(p) => (p.$active ? '#fff' : 'none')};
`;
const FileTab = styled(Tab)`
  width: 30px;
  color: #fff;
  background: #4f9db6;
`;
const Ribbon = styled.section`
  display: flex;
  flex: none;
  height: 51px;
  padding: 2px 0 1px;
  border-bottom: 1px solid #e2e2e2;
  font-family: Roboto, "Open Sans", sans-serif;
  button { font-family: inherit; }
`;
const Group = styled.div`
  display: flex;
  flex-direction: column;
  justify-content: space-between;
  border-right: 1px solid #dcdcdc;
`;
const Tools = styled.div`
  display: flex;
  align-items: flex-start;
`;
const Big = styled.button`
  display: flex;
  flex-direction: column;
  align-items: center;
  width: ${(p) => p.$w}px;
  color: ${(p) => (p.disabled ? '#c3c3c3' : '#444')};
`;
const BigIcon = styled.span`
  display: flex;
  align-items: center;
  justify-content: center;
  width: 18px;
  height: 18px;
  border: 1px solid ${(p) => (p.$framed ? '#e2e2e2' : 'transparent')};
`;
const SecondLine = styled.span`
  display: flex;
  align-items: center;
  gap: 2px;
  min-height: 8px;
`;
const List = styled.div`
  display: flex;
  flex-direction: column;
  width: ${(p) => p.$w}px;
`;
const Tool = styled.button`
  display: flex;
  align-items: center;
  gap: 1px;
  height: 12px;
  color: #444;
`;
const Gallery = styled.div`
  display: grid;
  grid-template-columns: repeat(3, 18px);
  grid-template-rows: repeat(2, 18px);
  border: 1px solid #e2e2e2;
`;
const Cell = styled.button`
  display: flex;
  align-items: center;
  justify-content: center;
`;
const GalleryScroll = styled.div`
  display: flex;
  flex-direction: column;
  align-items: center;
  justify-content: space-around;
  width: 11px;
  height: 38px;
`;
const Caption = styled.div`
  display: grid;
  grid-template-columns: 1fr auto;
  align-items: center;
  padding: 0 4px;
  text-align: center;
  color: #1c7f9f;
`;
const SelectionBar = styled.div`
  display: flex;
  flex: none;
  align-items: center;
  height: 17px;
  border-bottom: 1px solid #c8c8c8;
`;
const MenuButton = styled.button`
  display: flex;
  align-items: center;
  justify-content: center;
  gap: 2px;
  width: 42px;
`;
const Filter = styled.select`
  width: ${(p) => p.$w}px;
  height: 12px;
  margin-left: 4px;
  padding: 0 2px;
  border: 1px solid #bbb;
  border-radius: 0;
  appearance: none;
  font-family: Roboto, "Open Sans", sans-serif;
  background: conic-gradient(from -45deg at 50% 100%, #222 90deg, transparent 0) right 3px center / 5px 3px no-repeat, #fff;
`;
const Strip = styled.div`
  display: flex;
  margin-left: 1px;
`;
const Slot = styled.button`
  display: flex;
  align-items: center;
  justify-content: center;
  width: ${(p) => (p.$narrow ? 7 : 12)}px;
  height: 11px;
  background: ${(p) => (p.$on ? '#cfe6ec' : 'none')};
`;
const Divider = styled.span`
  width: 1px;
  height: 13px;
  margin: 0 3px;
  background: #dcdcdc;
`;
const Body = styled.main`
  display: flex;
  flex: 1;
  min-height: 0;
`;
const SideBar = styled.nav`
  display: flex;
  flex: none;
  flex-direction: column;
  width: 15px;
  border-right: 1px solid #bcc4c4;
  background: #dcdcdc;
`;
const SideTab = styled.button`
  display: flex;
  flex: none;
  align-items: center;
  justify-content: center;
  height: ${(p) => p.$h}px;
  margin-bottom: ${(p) => (p.$top ? 7 : 0)}px;
  background: ${(p) => (p.$active ? '#fff' : 'none')};
`;
const Panel = styled.aside`
  display: flex;
  flex: none;
  flex-direction: column;
  width: 180px;
  padding: 0 4px 0 2px;
  border-right: 1px solid #b9c4c6;
`;
const PanelTitle = styled.h1`
  display: flex;
  align-items: center;
  justify-content: space-between;
  height: 15px;
  margin: 0;
  padding: 0 2px;
  font-size: 7px;
  font-weight: normal;
`;
const Pin = styled.button`
  width: 8px;
  height: 7px;
  border: 1px solid #444;
`;
const TableBox = styled.div`
  flex: 1;
  min-height: 0;
  overflow: hidden;
  border: 1px solid #e0e0e0;
  border-bottom: 0;
`;
const Table = styled.table`
  width: 100%;
  table-layout: fixed;
  border-collapse: collapse;

  tr { height: 12px; }
  tbody tr:nth-child(5n) { height: 11px; }
  tbody tr:nth-child(odd) { background: #fafafa; }
  th, td {
    padding: 0 0 0 3px;
    white-space: nowrap;
    text-align: left;
    font-weight: normal;
    line-height: 9px;
    border-right: 1px solid #ececec;
    box-shadow: inset 0 -1px #f0f0f0;
  }
  th:last-child, td:last-child {
    padding-left: 2px;
    border-right: 0;
  }
  th { background: #f0f0f0; }
  td > svg { display: block; }
`;
const SortMark = styled.span`
  padding-left: 4px;
`;
const Node = styled.span`
  display: flex;
  align-items: center;
  gap: 1px;
  height: 10px;
`;
const Expander = styled.span`
  width: 6px;
  color: #555;
`;
const Leaf = styled.label`
  display: flex;
  align-items: center;
  gap: 1px;
  height: 10px;
  padding-left: 11px;
  color: ${(p) => (p.$dim ? '#aaa' : '#333')};
  font-weight: ${(p) => (p.$bold ? 'bold' : 'normal')};
`;
const Branch = styled.i`
  align-self: flex-start;
  width: 4px;
  height: ${(p) => (p.$last ? 6 : 10)}px;
  border-left: 1px solid #ccc;
  background: linear-gradient(#ccc, #ccc) 0 5px / 4px 1px no-repeat;
`;
const Tick = styled.input`
  display: grid;
  flex: none;
  appearance: none;
  width: 7px;
  height: 7px;
  margin: 0;
  border: 1px solid #555;
  background: #fff;
  &:checked::before {
    content: "";
    background: #1db52c;
    clip-path: polygon(0 45%, 20% 30%, 40% 55%, 85% 0, 100% 15%, 45% 100%);
  }
`;
const ScrollBar = styled.div`
  display: flex;
  height: 9px;
  background: #f0f0f0;
`;
const ScrollButton = styled.button`
  display: flex;
  align-items: center;
  justify-content: center;
  width: 11px;
`;
const Track = styled.div`
  flex: 1;
`;
const Thumb = styled.div`
  width: 86%;
  height: 9px;
  background: #cbcbcb;
`;
const Workspace = styled.section`
  display: flex;
  flex: 1;
  flex-direction: column;
  min-width: 0;
`;
const DocTabs = styled.div`
  display: flex;
  flex: none;
  height: 13px;
  border-bottom: 1px solid #6bacc0;
`;
const DocTab = styled.button`
  display: flex;
  align-items: center;
  gap: 2px;
  padding: 0 3px;
  color: #fff;
  background: #4f9db6;
`;
const Canvas = styled.div`
  flex: 1;
  min-height: 0;
  background: linear-gradient(#b3b3b5, #d2d3d5 50%, #e7e9eb 85%);
`;
const Drawing = styled.svg`
  display: block;
  width: 100%;
  height: 100%;
`;
const AxisText = styled.text`
  font-size: 6px;
  fill: #e3e8e9;
`;
